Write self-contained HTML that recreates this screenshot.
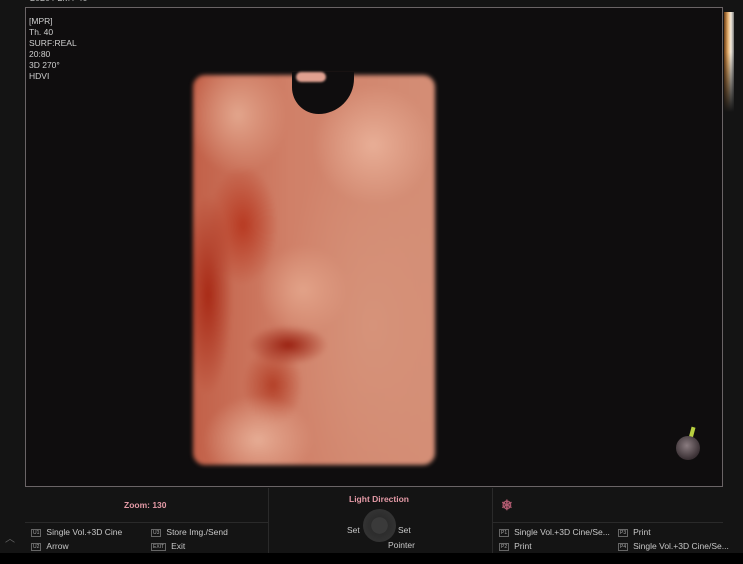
<!DOCTYPE html>
<html><head><meta charset="utf-8"><style>
*{margin:0;padding:0;box-sizing:border-box}
body{width:743px;height:564px;background:#141414;position:relative;overflow:hidden;font-family:"Liberation Sans",sans-serif;}
.abs{position:absolute}
.frame{left:25px;top:7px;width:698px;height:480px;border:1px solid #6a6466;background:#0f0d0e;}
.info{left:29px;top:16px;color:#cfcfcf;font-size:8.5px;line-height:11px;}
.top{left:30px;top:-7px;color:#bbb;font-size:9px}
.bar{left:724px;top:12px;width:10px;height:100px;background:linear-gradient(to right,#6b3a10,#e6b070 40%,#f4ede0 70%,#777);}
.bar2{left:724px;top:12px;width:10px;height:100px;background:linear-gradient(to bottom,rgba(20,20,20,0),rgba(20,20,20,0) 40%,#141414);}
.fetus{left:193px;top:75px;width:242px;height:390px;border-radius:12px;overflow:hidden;
background:
radial-gradient(ellipse 60px 60px at 180px 70px,#e8ae96,rgba(230,170,140,0)),
radial-gradient(ellipse 45px 45px at 110px 215px,#e2a288,rgba(230,160,130,0)),
radial-gradient(ellipse 50px 60px at 45px 40px,#e2a58c,rgba(230,160,130,0)),
radial-gradient(ellipse 55px 45px at 65px 365px,#e6ac94,rgba(230,160,130,0)),
radial-gradient(ellipse 40px 20px at 95px 270px,#9a2010,rgba(160,40,20,0)),
radial-gradient(ellipse 25px 100px at 15px 220px,#a82a16,rgba(170,40,20,0)),
radial-gradient(ellipse 35px 60px at 50px 150px,#b83a22,rgba(190,60,40,0)),
radial-gradient(ellipse 30px 40px at 80px 310px,#b44028,rgba(190,60,40,0)),
radial-gradient(ellipse 90px 200px at 180px 250px,#d6937a,rgba(214,147,122,0)),
linear-gradient(to right,#c26048,#d08068 40%,#d48e76);
filter:blur(2px);}
.notch{left:292px;top:72px;width:62px;height:42px;background:#0f0d0e;border-radius:0 0 40px 30px;}
.notch2{left:296px;top:72px;width:30px;height:10px;background:#e0a090;border-radius:5px;filter:blur(1px)}
.ball{left:676px;top:436px;width:24px;height:24px;border-radius:50%;background:radial-gradient(circle at 45% 40%,#8a7c80,#3a3034 70%);}
.stem{left:690px;top:427px;width:4px;height:12px;background:#b8d040;transform:rotate(15deg);}
.vl{background:#2a2a2a;width:1px}
.pink{color:#e49aa6;font-size:8.5px;font-weight:bold}
.lbl{color:#c8c8c8;font-size:8.5px}
.tag{display:inline-block;border:1px solid #666;color:#aaa;font-size:5px;padding:0 1px;margin-right:5px;vertical-align:1px;line-height:6px}
.row{left:25px;top:522px;width:698px;height:1px;background:#2a2a2a}
.blk{left:0;top:553px;width:743px;height:11px;background:#000}
</style></head><body>
<div class="abs top">2020 / 2M / 40</div>
<div class="abs frame"></div>
<div class="abs bar"></div><div class="abs bar2"></div>
<div class="abs info">[MPR]<br>Th. 40<br>SURF:REAL<br>20:80<br>3D 270°<br>HDVI</div>
<div class="abs fetus"></div>
<div class="abs notch"></div>
<div class="abs notch2"></div>
<div class="abs stem"></div>
<div class="abs ball"></div>
<div class="abs vl" style="left:268px;top:488px;height:65px"></div>
<div class="abs vl" style="left:492px;top:488px;height:65px"></div>
<div class="abs row" style="left:25px;width:243px"></div>
<div class="abs row" style="left:492px;width:231px"></div>
<div class="abs pink" style="left:124px;top:500px">Zoom: 130</div>
<div class="abs pink" style="left:349px;top:494px">Light Direction</div>
<div class="abs" style="left:363px;top:509px;width:33px;height:33px;border-radius:50%;background:radial-gradient(circle,#3a3a3a 35%,#2c2c2c 36%,#333 70%)"></div>
<div class="abs lbl" style="left:347px;top:525px">Set</div>
<div class="abs lbl" style="left:398px;top:525px">Set</div>
<div class="abs lbl" style="left:388px;top:540px">Pointer</div>
<div class="abs pink" style="left:501px;top:497px;font-size:14px;color:#b05a70">❄</div>
<div class="abs" style="left:5px;top:530px;color:#666;font-size:10px">︿</div>
<div class="abs lbl" style="left:31px;top:527px"><span class="tag">U1</span>Single Vol.+3D Cine</div>
<div class="abs lbl" style="left:31px;top:541px"><span class="tag">U2</span>Arrow</div>
<div class="abs lbl" style="left:151px;top:527px"><span class="tag">U3</span>Store Img./Send</div>
<div class="abs lbl" style="left:151px;top:541px"><span class="tag">EXIT</span>Exit</div>
<div class="abs lbl" style="left:499px;top:527px"><span class="tag">P1</span>Single Vol.+3D Cine/Se...</div>
<div class="abs lbl" style="left:499px;top:541px"><span class="tag">P2</span>Print</div>
<div class="abs lbl" style="left:618px;top:527px"><span class="tag">P3</span>Print</div>
<div class="abs lbl" style="left:618px;top:541px"><span class="tag">P4</span>Single Vol.+3D Cine/Se...</div>
<div class="abs blk"></div>
</body></html>
